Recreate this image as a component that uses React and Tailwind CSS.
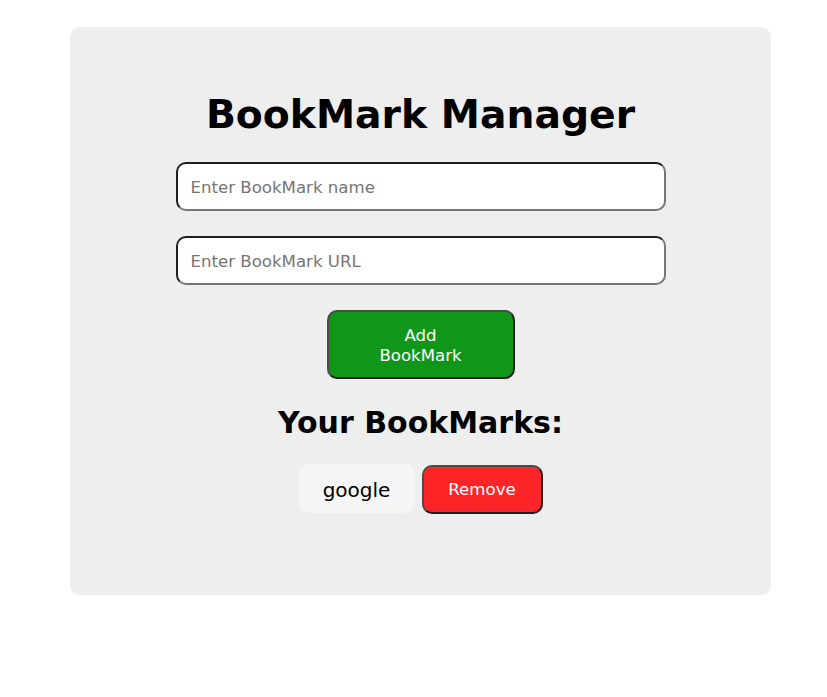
export default function App() {
  const font = { fontFamily: '"DejaVu Sans", Verdana, sans-serif' };
  return (
    <div className="min-h-[697px] bg-white pt-[27px]" style={font}>
      <div className="ml-[70px] w-[701px] rounded-[10px] bg-[#eeeeee] pt-[64px] pb-[81px] flex flex-col items-center">
        <h1 className="text-[39.3px] leading-[48px] font-bold text-black mb-[23px]">BookMark Manager</h1>
        <input
          className="w-[490px] h-[49px] rounded-[10px] bg-white border-2 border-t-[#1e1e1e] border-l-[#1e1e1e] border-b-[#767676] border-r-[#767676] pl-[13px] pt-[2px] text-[16.6px] text-black placeholder:text-[#757575] outline-none mb-[25px]"
          placeholder="Enter BookMark name"
          style={font}
        />
        <input
          className="w-[490px] h-[49px] rounded-[10px] bg-white border-2 border-t-[#1e1e1e] border-l-[#1e1e1e] border-b-[#767676] border-r-[#767676] pl-[13px] pt-[2px] text-[16.6px] text-black placeholder:text-[#757575] outline-none mb-[25px]"
          placeholder="Enter BookMark URL"
          style={font}
        />
        <button
          className="w-[188px] h-[69px] rounded-[10px] bg-[#109618] text-white text-[16.6px] leading-[20px] px-[50px] pt-[3px] border-2 border-t-[#4a4a4a] border-l-[#4a4a4a] border-b-[#1e1e1e] border-r-[#1e1e1e]"
          style={font}
        >
          Add BookMark
        </button>
        <h2 className="mt-[26px] text-[30px] leading-[35px] font-bold text-black mb-[24px]">Your BookMarks:</h2>
        <div className="flex items-start gap-[7px]">
          <div className="w-[116px] h-[49px] rounded-[10px] bg-[#f5f5f5] flex items-center justify-center pt-[2px] text-[20px] text-black">google</div>
          <button
            className="mt-[1px] w-[121px] h-[49px] rounded-[10px] bg-[#fe2528] text-white text-[16.6px] pt-[2px] border-2 border-t-[#4a4a4a] border-l-[#4a4a4a] border-b-[#1e1e1e] border-r-[#1e1e1e]"
            style={font}
          >
            Remove
          </button>
        </div>
      </div>
    </div>
  );
}
